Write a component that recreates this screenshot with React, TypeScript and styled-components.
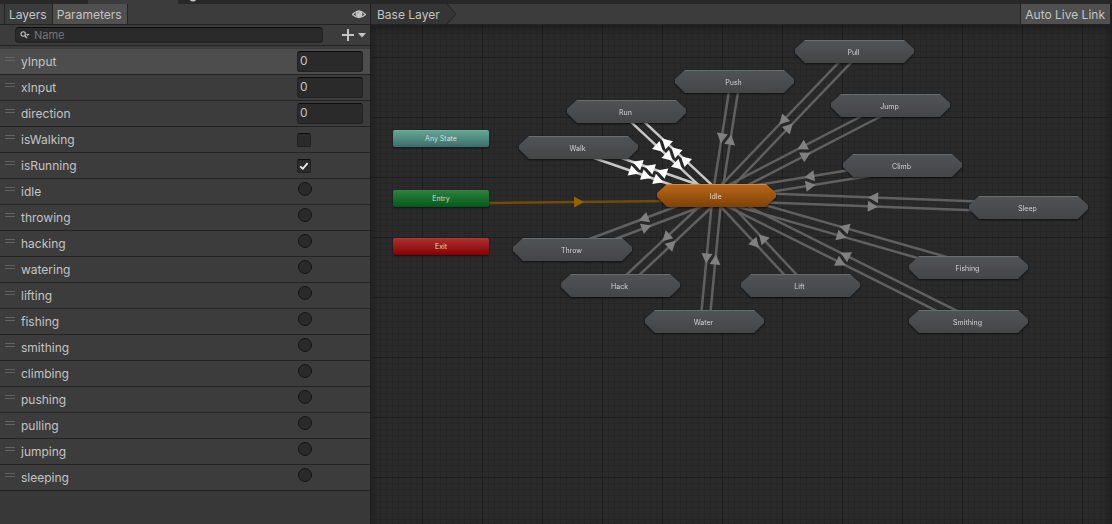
import React, { useState } from "react";
import styled, { createGlobalStyle, css } from "styled-components";

const GlobalStyle = createGlobalStyle`
  *, *::before, *::after { box-sizing: border-box; }
  body {
    margin: 0;
    background: #282828;
    color: #c4c4c4;
    font-family: Inter, Roboto, "Liberation Sans", sans-serif;
    font-size: 12px;
    line-height: 16px;
  }
  button, input { font: inherit; color: inherit; }
`;

const Window = styled.div`
  display: flex;
  flex-direction: column;
  min-height: 100vh;
`;

const DockTabs = styled.div`
  display: flex;
  flex: none;
  height: 4px;
  padding-left: 88px;
  gap: 10px;
  background: #282828;
  overflow: hidden;
`;

const DockTab = styled.div`
  width: 90px;
  background: #3c3c3c;
`;

const Panels = styled.div`
  display: flex;
  flex: 1;
`;

const Sidebar = styled.aside`
  display: flex;
  flex-direction: column;
  flex: none;
  width: 371px;
  background: #383838;
  border-right: 1px solid #1f1f1f;
`;

const Toolbar = styled.div`
  display: flex;
  flex: none;
  align-items: stretch;
  height: 21px;
  background: #3c3c3c;
  border-bottom: 1px solid #232323;
`;

const TabGroup = styled.div`
  display: flex;
  flex: 1;
  padding-left: 4px;
`;

const ToolbarButton = styled.button<{ $active?: boolean }>`
  height: 20px;
  padding: 1px 5px 0 4px;
  border: 0;
  border-left: 1px solid #232323;
  font-size: 12px;
  line-height: 16px;
  white-space: nowrap;
  background: ${(p) => (p.$active ? "#505050" : "#3c3c3c")};
`;

const TabEnd = styled.div`
  width: 1px;
  background: #232323;
`;

const IconButton = styled.button`
  display: flex;
  align-items: center;
  padding: 0 4px;
  border: 0;
  background: none;
`;

const SearchRow = styled.div`
  display: flex;
  flex: none;
  align-items: center;
  height: 21px;
  padding-left: 15px;
  background: #3c3c3c;
  border-bottom: 1px solid #232323;
`;

const SearchBox = styled.div`
  display: flex;
  flex: 1;
  align-items: center;
  gap: 4px;
  height: 16px;
  margin-right: 15px;
  padding-left: 4px;
  border: 1px solid #212121;
  border-top-color: #0d0d0d;
  border-radius: 4px;
  background: #2a2a2a;
`;

const SearchInput = styled.input`
  flex: 1;
  min-width: 0;
  height: 14px;
  padding: 0;
  border: 0;
  outline: 0;
  background: none;
  font-size: 11px;
  &::placeholder { color: #767676; opacity: 1; }
`;

const List = styled.ul`
  margin: 0;
  padding: 3px 0 0;
  list-style: none;
  background: #3c3c3c;
`;

const Row = styled.li<{ $selected?: boolean }>`
  display: grid;
  grid-template-columns: 16px 1fr 73px;
  height: 26px;
  padding-left: 5px;
  border-bottom: 1px solid #232323;
  background: ${(p) => (p.$selected ? "#4d4d4d" : "#3c3c3c")};
`;

const Handle = styled.span`
  width: 10px;
  height: 4px;
  margin-top: 8px;
  border: solid #626262;
  border-width: 1px 0;
`;

const Name = styled.label`
  padding-top: 5px;
`;

const well = css`
  margin: 0;
  border: 1px solid #212121;
  border-top-color: #0d0d0d;
  background: #2a2a2a;
`;

const NumberField = styled.input`
  ${well}
  width: 66px;
  height: 21px;
  margin-top: 2px;
  padding: 0 2px 2px;
  border-radius: 3px;
  outline: 0;
`;

const CheckCell = styled.span`
  display: grid;
  width: 14px;
  height: 14px;
  margin-top: 6px;
  & > * { grid-area: 1 / 1; }
`;

const CheckBox = styled.input`
  ${well}
  appearance: none;
  width: 14px;
  height: 14px;
  border-radius: 2px;
`;

const CheckMark = styled.svg`
  width: 14px;
  height: 14px;
  pointer-events: none;
`;

const Trigger = styled.input`
  appearance: none;
  width: 14px;
  height: 14px;
  margin: 3px 1px 0;
  border: 1px solid #151515;
  border-radius: 50%;
  background: #2a2a2a;
`;

const GraphPanel = styled.main`
  display: flex;
  flex: 1;
  flex-direction: column;
  min-width: 0;
  border-right: 2px solid #1f1f1f;
`;

const Crumb = styled.a`
  display: flex;
  padding: 3px 0 0 6px;
  background: #353535;
  color: inherit;
  text-decoration: none;
  white-space: nowrap;
`;

const CrumbArrow = styled.svg`
  flex: none;
  width: 18px;
  height: 20px;
`;

const Spacer = styled.div`
  flex: 1;
`;

const Canvas = styled.div`
  position: relative;
  flex: 1;
  min-height: 320px;
  overflow: hidden;
  background-color: #2a2a2a;
  background-image:
    linear-gradient(to right, #1e1e1e 1px, transparent 1px),
    linear-gradient(to bottom, #1e1e1e 1px, transparent 1px),
    linear-gradient(to right, #262626 1px, transparent 1px),
    linear-gradient(to bottom, #262626 1px, transparent 1px);
  background-size: 60px 60px, 60px 60px, 6px 6px, 6px 6px;
  background-position: 51px 32px, 51px 32px, 3px 2px, 3px 2px;
  &::after {
    content: "";
    position: absolute;
    inset: 0;
    box-shadow: inset 0 3px 8px rgba(0, 0, 0, 0.35);
    pointer-events: none;
  }
`;

const Wires = styled.svg`
  position: absolute;
  inset: 0;
  width: 100%;
  height: 100%;
`;

const nodeText = css`
  position: absolute;
  padding: 0;
  border: 0;
  font-size: 7px;
  line-height: 10px;
  text-align: center;
`;

const HexNode = styled.button<{ $x: number; $y: number; $hot?: boolean }>`
  ${nodeText}
  left: ${(p) => p.$x}px;
  top: ${(p) => p.$y}px;
  width: 119px;
  height: 23px;
  padding: 2px 2px 0 0;
  background: none;
  color: ${(p) => (p.$hot ? "#e0d2c4" : "#d2d2d2")};
  filter: drop-shadow(0 1px 1px rgba(0, 0, 0, 0.6));
  &::before {
    content: "";
    position: absolute;
    inset: 0;
    z-index: -1;
    clip-path: polygon(10px 0, 109px 0, 119px 9px, 119px 13px, 109px 23px, 10px 23px, 0 13px, 0 9px);
    background: ${(p) =>
      p.$hot
        ? "linear-gradient(#d08a45 1px, #b8661a 1px, #7f4107)"
        : "linear-gradient(#6a6d70 1px, #505356 1px, #434547)"};
  }
`;

const tones = {
  teal: "#7db5a6 0, #61a593 1px, #3c6e6a",
  green: "#3f8a4c 0, #2b7f3b 1px, #035a1c",
  red: "#b04444 0, #a92f2f 1px, #870000",
};

const PlainNode = styled.button<{ $y: number; $tone: keyof typeof tones }>`
  ${nodeText}
  left: 22px;
  top: ${(p) => p.$y}px;
  width: 96px;
  height: 17px;
  border-radius: 2px;
  color: #dcdcdc;
  background: linear-gradient(${(p) => tones[p.$tone]});
  box-shadow: 0 1px 2px rgba(0, 0, 0, 0.5);
`;

type Param = { name: string; kind: "number" | "bool" | "trigger" };

const params: Param[] = [
  { name: "yInput", kind: "number" },
  { name: "xInput", kind: "number" },
  { name: "direction", kind: "number" },
  { name: "isWalking", kind: "bool" },
  { name: "isRunning", kind: "bool" },
  ...[
    "idle", "throwing", "hacking", "watering", "lifting", "fishing",
    "smithing", "climbing", "pushing", "pulling", "jumping", "sleeping",
  ].map((name): Param => ({ name, kind: "trigger" })),
];

const states = [
  { name: "Pull", x: 424, y: 15 },
  { name: "Push", x: 304, y: 45 },
  { name: "Run", x: 196, y: 75, live: true },
  { name: "Walk", x: 148, y: 111, live: true },
  { name: "Jump", x: 460, y: 69 },
  { name: "Climb", x: 472, y: 129 },
  { name: "Sleep", x: 598, y: 171 },
  { name: "Fishing", x: 538, y: 231 },
  { name: "Smithing", x: 538, y: 285 },
  { name: "Lift", x: 370, y: 249 },
  { name: "Water", x: 274, y: 285 },
  { name: "Hack", x: 190, y: 249 },
  { name: "Throw", x: 142, y: 213 },
];

const idle = { name: "Idle", x: 286, y: 159 };

type Point = { x: number; y: number };
const center = (n: Point): Point => ({ x: n.x + 60, y: n.y + 12 });

type WireProps = { from: Point; to: Point; line: string; head: string; heads?: number };

/* A transition runs on the right-hand side of its direction of travel. */
function Wire({ from, to, line, head, heads = 1 }: WireProps) {
  const dx = to.x - from.x;
  const dy = to.y - from.y;
  const length = Math.hypot(dx, dy);
  const angle = (Math.atan2(dy, dx) * 180) / Math.PI;
  const mid = length / 2;
  return (
    <g transform={`translate(${from.x} ${from.y}) rotate(${angle})`}>
      <line x1={0} y1={4.5} x2={length} y2={4.5} stroke={line} strokeWidth={2.5} />
      {Array.from({ length: heads }, (_, i) => {
        const c = mid + (i - (heads - 1) / 2) * 13;
        return <path key={i} d={`M${c - 5} -1 L${c + 5} 4.5 L${c - 5} 10 Z`} fill={head} />;
      })}
    </g>
  );
}

function ParamControl({ param }: { param: Param }) {
  const [checked, setChecked] = useState(param.name === "isRunning");
  if (param.kind === "number") return <NumberField id={param.name} defaultValue="0" />;
  if (param.kind === "trigger") return <Trigger id={param.name} type="radio" name="trigger" />;
  return (
    <CheckCell>
      <CheckBox
        id={param.name}
        type="checkbox"
        checked={checked}
        onChange={(e) => setChecked(e.target.checked)}
      />
      {checked && (
        <CheckMark viewBox="0 0 14 14" aria-hidden="true">
          <path d="M3.2 7.3 L5.8 9.8 L10.6 4.2" fill="none" stroke="#f0f0f0" strokeWidth="1.8" />
        </CheckMark>
      )}
    </CheckCell>
  );
}

export default function App() {
  return (
    <>
      <GlobalStyle />
      <Window>
        <DockTabs>
          <DockTab />
          <svg width="12" height="4" aria-hidden="true">
            <circle cx="5" cy="-2" r="3.5" fill="#c4c4c4" />
          </svg>
        </DockTabs>
        <Panels>
          <Sidebar>
            <Toolbar>
              <TabGroup>
                <ToolbarButton>Layers</ToolbarButton>
                <ToolbarButton $active>Parameters</ToolbarButton>
                <TabEnd />
              </TabGroup>
              <IconButton aria-label="Toggle visibility">
                <svg width="14" height="12" viewBox="0 0 14 12">
                  <path d="M0.5 6.5 Q7 -0.5 13.5 6.5 Q7 12.5 0.5 6.5 Z" fill="none" stroke="#c4c4c4" strokeWidth="1.2" />
                  <circle cx="7" cy="6" r="3.4" fill="#c4c4c4" />
                  <circle cx="6" cy="4.8" r="0.8" fill="#8a8a8a" />
                </svg>
              </IconButton>
            </Toolbar>
            <SearchRow>
              <SearchBox>
                <svg width="10" height="10" viewBox="0 0 10 10" aria-hidden="true">
                  <circle cx="3.2" cy="4" r="2.2" fill="none" stroke="#c4c4c4" strokeWidth="1.1" />
                  <path d="M4.8 5.6 L7 8" stroke="#c4c4c4" strokeWidth="1.4" />
                  <path d="M6 4 H9.6 L7.8 6 Z" fill="#c4c4c4" />
                </svg>
                <SearchInput aria-label="Search parameters" placeholder="Name" />
              </SearchBox>
              <IconButton aria-label="Add parameter">
                <svg width="24" height="12" viewBox="0 0 24 12">
                  <path d="M0 6 H12 M6 0 V12" stroke="#c4c4c4" strokeWidth="2" />
                  <path d="M16 4 H24 L20 8.5 Z" fill="#c4c4c4" />
                </svg>
              </IconButton>
            </SearchRow>
            <List>
              {params.map((p, i) => (
                <Row key={p.name} $selected={i === 0}>
                  <Handle />
                  <Name htmlFor={p.name}>{p.name}</Name>
                  <ParamControl param={p} />
                </Row>
              ))}
            </List>
          </Sidebar>
          <GraphPanel>
            <Toolbar>
              <Crumb href="#base-layer">Base Layer</Crumb>
              <CrumbArrow viewBox="0 0 18 20" aria-hidden="true">
                <path d="M0 0 H7 L16 10 L7 20 H0 Z" fill="#353535" />
                <path d="M7 0 L16 10 L7 20" fill="none" stroke="#232323" strokeWidth="1" />
              </CrumbArrow>
              <Spacer />
              <ToolbarButton $active>Auto Live Link</ToolbarButton>
            </Toolbar>
            <Canvas>
              <Wires aria-hidden="true">
                <Wire from={{ x: 70, y: 174 }} to={center(idle)} line="#714a04" head="#966202" />
                {states.map((s) => {
                  const look = s.live
                    ? { line: "#c8c8c8", head: "#ffffff", heads: 3 }
                    : { line: "#606060", head: "#808080" };
                  return (
                    <g key={s.name}>
                      <Wire from={center(idle)} to={center(s)} {...look} />
                      <Wire from={center(s)} to={center(idle)} {...look} />
                    </g>
                  );
                })}
              </Wires>
              <PlainNode $y={105} $tone="teal">Any State</PlainNode>
              <PlainNode $y={165} $tone="green">Entry</PlainNode>
              <PlainNode $y={213} $tone="red">Exit</PlainNode>
              {states.map((s) => (
                <HexNode key={s.name} $x={s.x} $y={s.y}>{s.name}</HexNode>
              ))}
              <HexNode $x={idle.x} $y={idle.y} $hot>{idle.name}</HexNode>
            </Canvas>
          </GraphPanel>
        </Panels>
      </Window>
    </>
  );
}
